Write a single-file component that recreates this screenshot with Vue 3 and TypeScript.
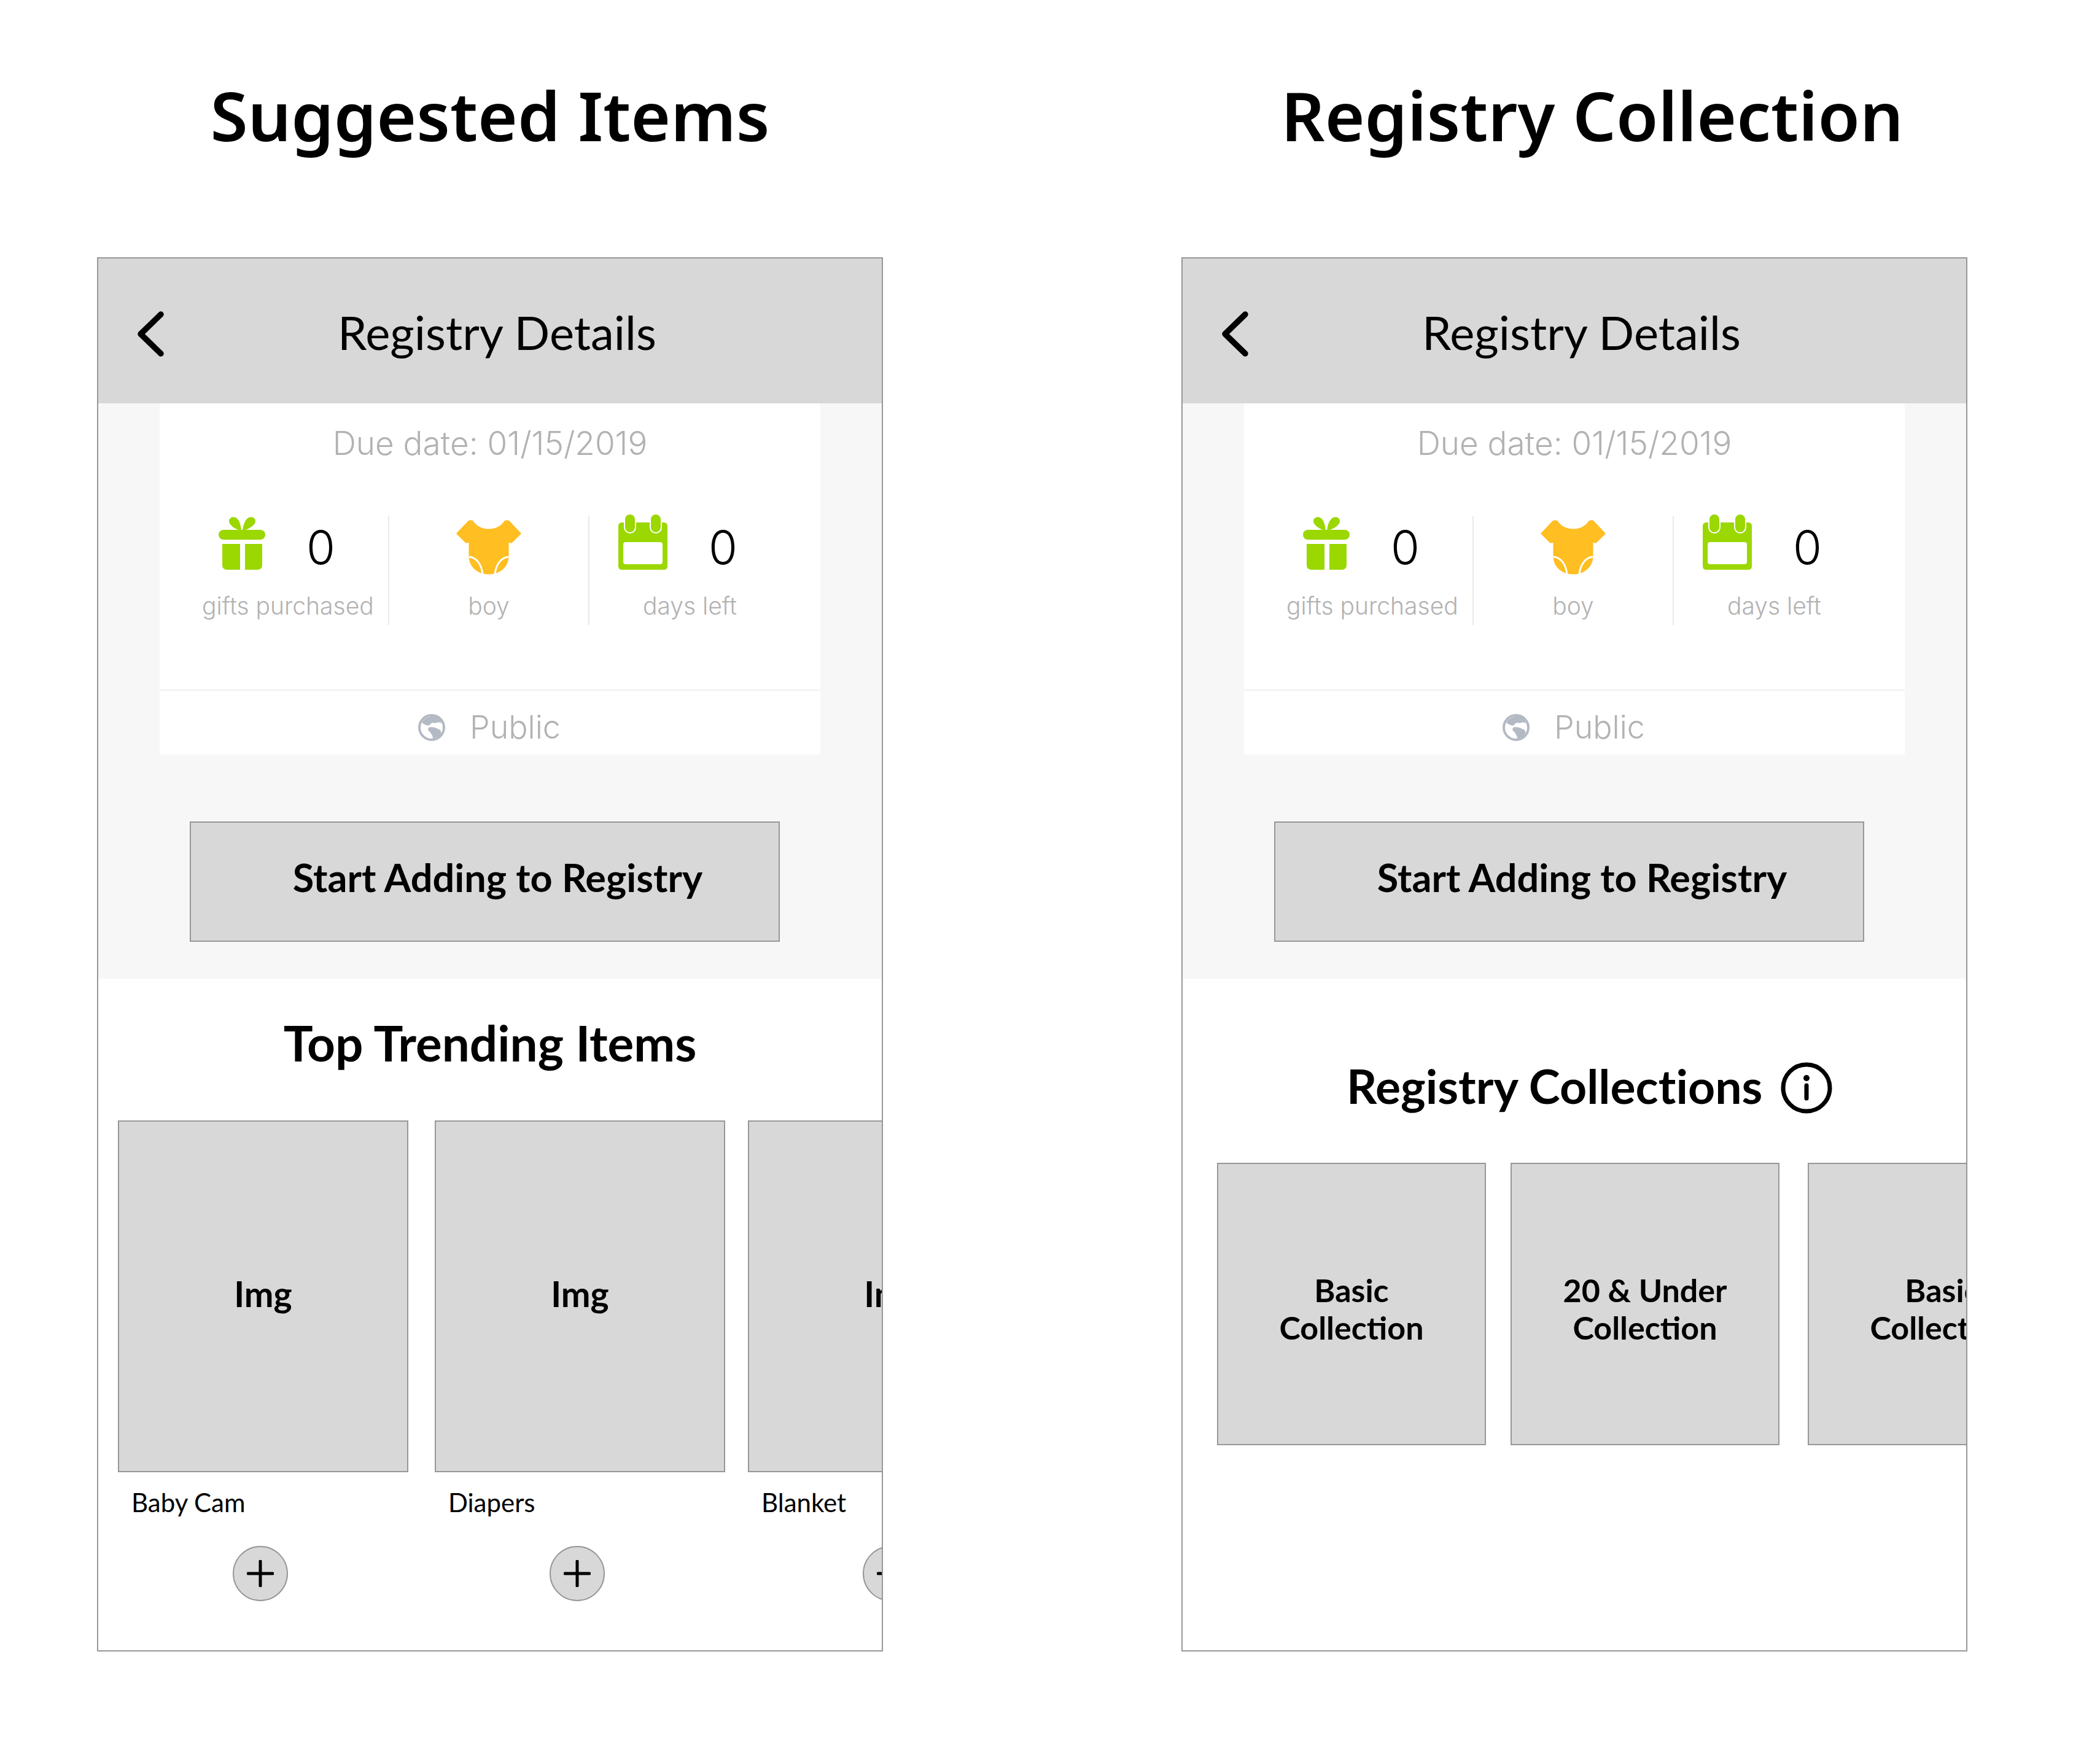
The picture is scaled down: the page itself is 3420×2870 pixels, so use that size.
<script setup lang="ts">
interface Phone {
  title: string
  kind: 'items' | 'collections'
}
const phones: Phone[] = [
  { title: 'Suggested Items', kind: 'items' },
  { title: 'Registry Collection', kind: 'collections' },
]
const items = ['Baby Cam', 'Diapers', 'Blanket']
const collections = [
  ['Basic', 'Collection'],
  ['20 & Under', 'Collection'],
  ['Basic', 'Collection'],
]
</script>

<template>
  <div class="page">
    <section v-for="p in phones" :key="p.title" class="column" :class="p.kind">
      <h1 class="page-title">{{ p.title }}</h1>
      <div class="phone">
        <header class="bar">
          <svg class="back" width="44" height="74" viewBox="0 0 44 74">
            <path d="M39 5 L6 37 L39 69" fill="none" stroke="#000" stroke-width="9.5" stroke-linecap="round" stroke-linejoin="round" />
          </svg>
          <span class="bar-title">Registry Details</span>
        </header>

        <div class="summary">
          <div class="card">
            <p class="due">Due date: 01/15/2019</p>
            <div class="stats">
              <div class="stat stat-gift">
                <div class="stat-top">
                  <svg width="76" height="88" viewBox="0 0 76 88" fill="#9bd700">
                    <rect x="0" y="22" width="76" height="16" rx="8" />
                    <path d="M6 45H35V87H14Q6 87 6 79Z" />
                    <path d="M43 45H71V79Q71 87 63 87H43Z" />
                    <path d="M37 24C28 21 17 15 17 8C17 2 23 0 28 2C33 5 36 12 37 24Z" />
                    <path d="M39 24C48 21 60 15 60 8C60 2 54 0 49 2C44 5 40 12 39 24Z" />
                  </svg>
                  <span class="count">0</span>
                </div>
                <span class="stat-label">gifts purchased</span>
              </div>
              <div class="stat stat-boy">
                <div class="stat-top">
                  <svg width="106" height="89" viewBox="0 0 106 89">
                    <path d="M26 2C33 12 43 16 53 16C63 16 73 12 80 2L85 2L104 22L90 36L84 35V59C84 76 70 87 53 87C36 87 22 76 22 59V35L16 36L2 22L21 2Z" fill="#ffbe21" stroke="#ffbe21" stroke-width="3" stroke-linejoin="round" />
                    <path d="M21 60C33 61 41 72 43 88M85 60C73 61 65 72 63 88" fill="none" stroke="#fff" stroke-width="3" />
                  </svg>
                </div>
                <span class="stat-label">boy</span>
              </div>
              <div class="stat stat-days">
                <div class="stat-top">
                  <svg width="80" height="91" viewBox="0 0 80 91">
                    <path d="M6 14H74Q80 14 80 20V85Q80 91 74 91H6Q0 91 0 85V20Q0 14 6 14Z" fill="#9bd700" />
                    <rect x="8" y="46" width="64" height="36" rx="4" fill="#fff" />
                    <rect x="10" y="0" width="18" height="31" rx="9" fill="#9bd700" stroke="#fff" stroke-width="2" />
                    <rect x="52" y="0" width="18" height="31" rx="9" fill="#9bd700" stroke="#fff" stroke-width="2" />
                  </svg>
                  <span class="count">0</span>
                </div>
                <span class="stat-label">days left</span>
              </div>
            </div>
            <div class="privacy">
              <svg width="44" height="44" viewBox="0 0 44 44">
                <circle cx="22" cy="22" r="20" fill="#fff" stroke="#b4bac4" stroke-width="4" />
                <path d="M6 14C10 7 17 3 27 4C33 5 37 10 38 15C34 13 31 13 28 15C24 13 20 15 19 18C15 20 10 17 6 14Z" fill="#b4bac4" />
                <path d="M17 22C22 20 28 22 34 25C38 27 38 31 36 34C32 38 27 40 24 40C24 34 19 29 16 26Z" fill="#b4bac4" />
              </svg>
              <span>Public</span>
            </div>
          </div>
          <button class="cta" type="button">Start Adding to Registry</button>
        </div>

        <div v-if="p.kind === 'items'" class="lower">
          <h2 class="section-title">Top Trending Items</h2>
          <div class="item-row">
            <article v-for="name in items" :key="name" class="item">
              <div class="item-img">Img</div>
              <span class="item-name">{{ name }}</span>
              <div class="add">
                <svg width="44" height="44" viewBox="0 0 44 44">
                  <path d="M22 2V42M2 22H42" stroke="#000" stroke-width="5" stroke-linecap="round" />
                </svg>
              </div>
            </article>
          </div>
        </div>

        <div v-else class="lower lower-col">
          <div class="section-head">
            <h2 class="section-title collections-title">Registry Collections</h2>
            <svg class="info" width="84" height="84" viewBox="0 0 84 84">
              <circle cx="42" cy="42" r="38" fill="none" stroke="#000" stroke-width="7" />
              <circle cx="42" cy="26" r="5" fill="#000" />
              <path d="M42 38V59" stroke="#000" stroke-width="7" stroke-linecap="round" />
            </svg>
          </div>
          <div class="col-row">
            <div v-for="(c, i) in collections" :key="i" class="col-card">
              <span>{{ c[0] }}</span>
              <span>{{ c[1] }}</span>
            </div>
          </div>
        </div>
      </div>
    </section>
  </div>
</template>

<style>
html, body { margin: 0; background: #fff; }
</style>

<style scoped>
.page {
  width: 3420px;
  height: 2870px;
  box-sizing: border-box;
  padding-left: 158px;
  display: flex;
  gap: 486px;
  background: #fff;
  color: #000;
  font-family: "Lato", "Liberation Sans", sans-serif;
  font-variant-ligatures: none;
}
.column { width: 1280px; display: flex; flex-direction: column; }
.page-title {
  margin: 0;
  height: 419px;
  padding-bottom: 46px;
  box-sizing: border-box;
  display: flex;
  align-items: center;
  justify-content: center;
  font: 600 111px "Noto Sans", sans-serif;
}
.collections .page-title { padding-left: 58px; }
.phone {
  width: 1280px;
  height: 2271px;
  box-sizing: border-box;
  border: 2px solid #979797;
  overflow: hidden;
  display: flex;
  flex-direction: column;
}
.bar {
  flex: none;
  height: 236px;
  background: #d8d8d8;
  display: flex;
  align-items: center;
  padding-left: 63px;
  box-sizing: border-box;
}
.back { flex: none; margin-top: 10px; }
.bar-title { margin-left: 283px; font-size: 76px; line-height: 1; margin-top: 3px; white-space: nowrap; }
.summary {
  flex: none;
  height: 937px;
  box-sizing: border-box;
  background: #f7f7f7;
  display: flex;
  flex-direction: column;
}
.card {
  margin-left: 100px;
  width: 1076px;
  height: 572px;
  background: #fff;
  display: flex;
  flex-direction: column;
  flex: none;
}
.due {
  margin: 0;
  height: 130px;
  padding-top: 34px;
  box-sizing: border-box;
  text-align: center;
  color: #b2b2b2;
  font: 300 53px/62px "Inter", sans-serif;
}
.stats {
  display: grid;
  grid-template-columns: 372px 326px 378px;
  flex: none;
  align-items: start;
  padding-top: 54px;
  box-sizing: border-box;
  height: 336px;
}
.stat { height: 177px; display: flex; flex-direction: column; box-sizing: border-box; }
.stat-boy, .stat-days { border-left: 2px solid #e9e9e9; }
.stat-gift { padding-left: 96px; }
.stat-boy { align-items: center; padding-top: 6px; }
.stat-days { padding-left: 47px; }
.stat-top { height: 123px; display: flex; align-items: flex-start; }
.stat-boy .stat-top { height: 117px; }
.stat-days svg { margin-top: -4px; }
.count { font: 300 76px/100px "Inter", sans-serif; }
.stat-gift .count { margin-left: 67px; }
.stat-days .count { margin-left: 67px; }
.stat-label {
  color: #b2b2b2;
  font: 300 39px/46px "Inter", sans-serif;
  white-space: nowrap;
}
.stat-gift .stat-label { margin-left: -27px; }
.stat-days .stat-label { margin-left: 40px; }
.privacy {
  flex: 1;
  border-top: 2px solid #efefef;
  display: flex;
  align-items: center;
  padding: 16px 0 0 421px;
  gap: 40px;
  color: #b2b2b2;
  font: 300 52px/1 "Inter", sans-serif;
}
.cta {
  margin: 109px 0 0 149px;
  width: 961px;
  height: 196px;
  flex: none;
  background: #d8d8d8;
  border: 2px solid #979797;
  padding: 0 0 16px 42px;
  color: #000;
  font: 700 63px "Lato", sans-serif;
  font-variant-ligatures: none;
}
.lower { flex: 1; min-height: 0; display: flex; flex-direction: column; }
.section-title { margin: 0; font: 700 80px/1 "Lato", sans-serif; white-space: nowrap; font-variant-ligatures: none; }
.collections-title { font-size: 77px; margin-top: -4px; }
.lower > .section-title { text-align: center; margin-top: 64px; }
.item-row { display: flex; margin-top: 87px; padding-left: 32px; }
.item { flex: none; width: 473px; margin-right: 43px; display: flex; flex-direction: column; }
.item:nth-child(2) { margin-right: 37px; }
.item-img {
  height: 573px;
  background: #d8d8d8;
  border: 2px solid #979797;
  box-sizing: border-box;
  display: flex;
  align-items: center;
  justify-content: center;
  font: 700 57px "Lato", sans-serif;
  padding-bottom: 10px;
}
.item-name { margin: 26px 0 0 22px; font: 400 42px/46px "Lato", sans-serif; }
.add {
  margin: 48px 0 0 187px;
  width: 90px;
  height: 90px;
  border-radius: 50%;
  box-sizing: border-box;
  background: #d8d8d8;
  border: 2px solid #979797;
  display: flex;
  align-items: center;
  justify-content: center;
}
.section-head { display: flex; align-items: center; justify-content: flex-start; margin: 132px 0 0 267px; gap: 30px; }
.info { margin-top: 4px; }
.col-row { display: flex; margin-top: 80px; padding-left: 56px; }
.col-card {
  flex: none;
  width: 438px;
  height: 460px;
  margin-right: 40px;
  background: #d8d8d8;
  border: 2px solid #979797;
  box-sizing: border-box;
  display: flex;
  flex-direction: column;
  align-items: center;
  justify-content: center;
  font: 700 52px/61px "Lato", sans-serif;
  padding-top: 16px;
}
.col-card:nth-child(2) { margin-right: 46px; }
.col-card span { white-space: nowrap; }
</style>
